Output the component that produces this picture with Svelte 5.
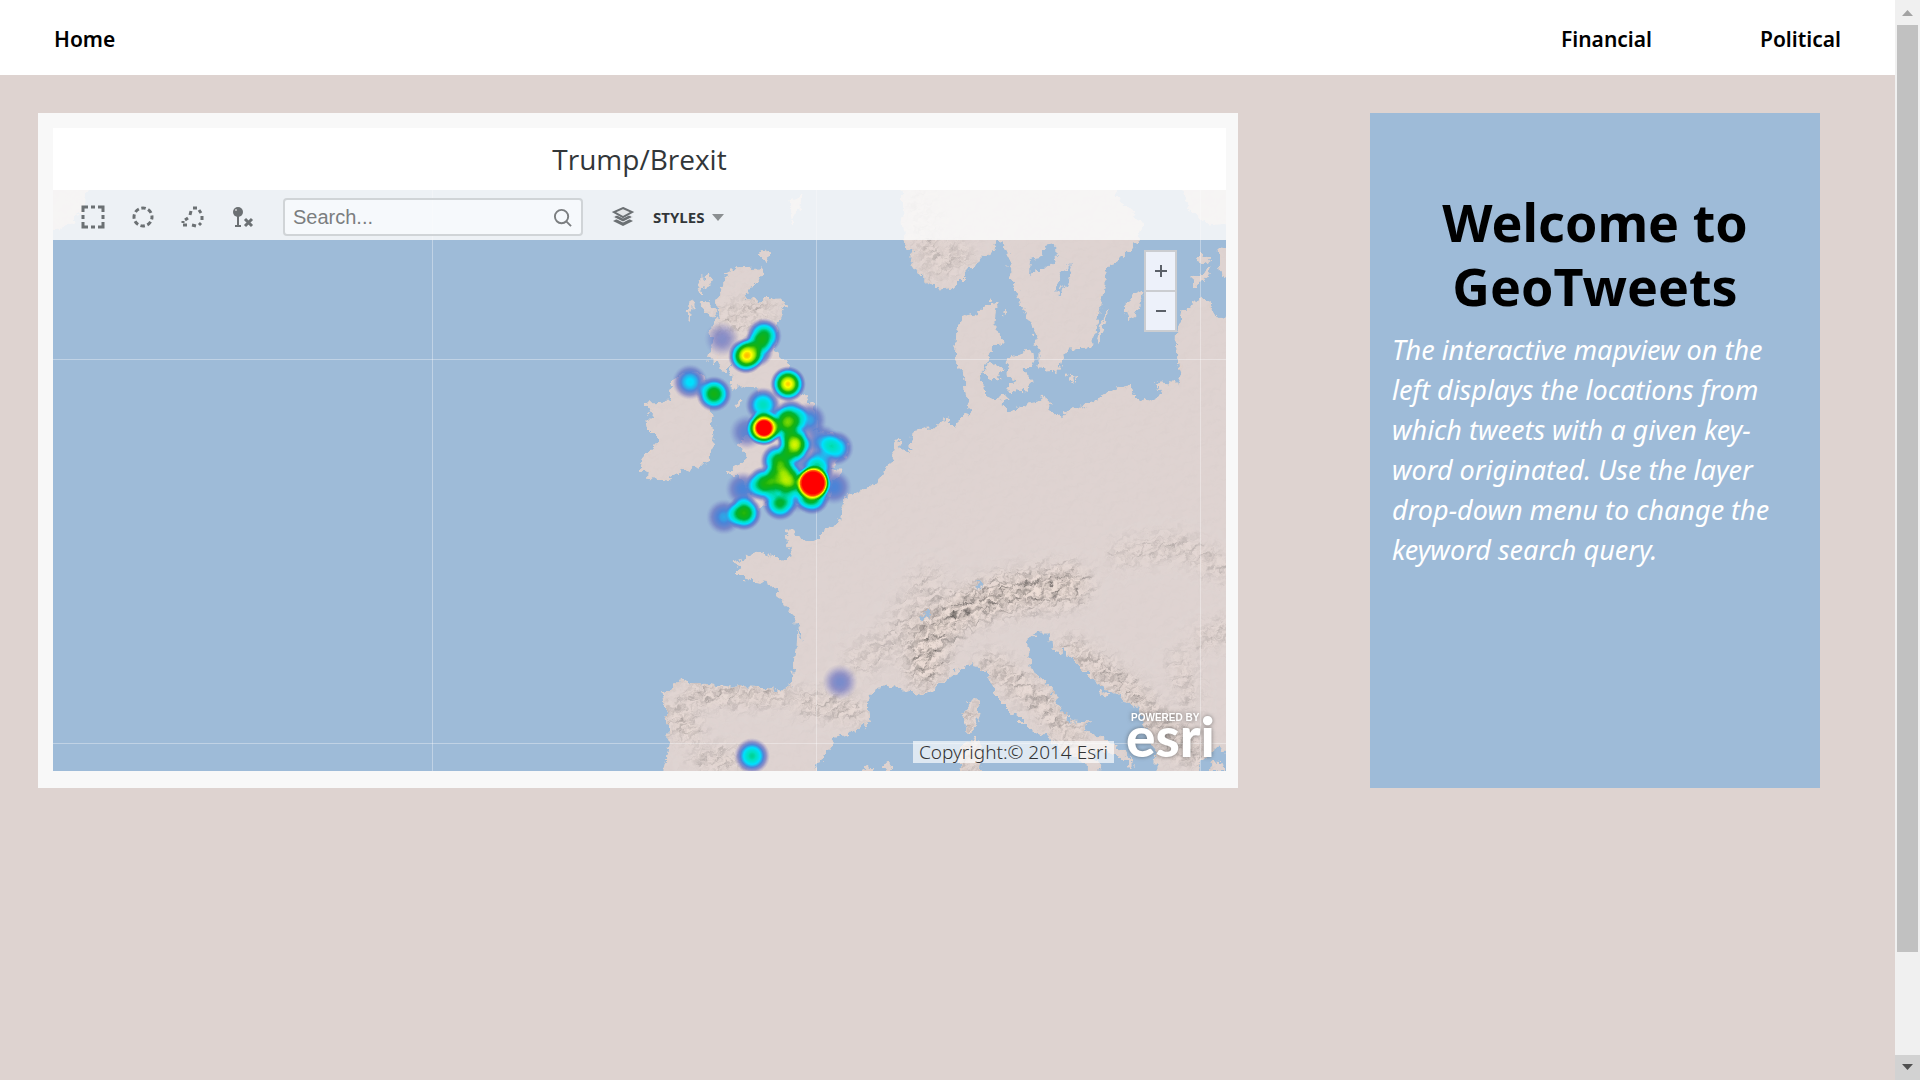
<script>
  let query = $state('');

  const links = ['Financial', 'Political'];

  // heat points, i = intensity
  const points = [
    { x: 746, y: 356, i: 0.82 },
    { x: 756, y: 350, i: 0.4 },
    { x: 764, y: 336, i: 0.54 },
    { x: 788, y: 384, i: 0.84 },
    { x: 690, y: 382, i: 0.31 },
    { x: 714, y: 394, i: 0.58 },
    { x: 722, y: 339, i: 0.12 },
    { x: 763, y: 405, i: 0.4 },
    { x: 764, y: 428, i: 1.3 },
    { x: 747, y: 432, i: 0.16 },
    { x: 791, y: 417, i: 0.48 },
    { x: 783, y: 424, i: 0.42 },
    { x: 809, y: 420, i: 0.24 },
    { x: 795, y: 445, i: 0.74 },
    { x: 791, y: 432, i: 0.25 },
    { x: 778, y: 461, i: 0.54 },
    { x: 790, y: 461, i: 0.24 },
    { x: 822, y: 442, i: 0.24 },
    { x: 836, y: 448, i: 0.36 },
    { x: 817, y: 467, i: 0.44 },
    { x: 813, y: 483, i: 2.4 },
    { x: 812, y: 497, i: 0.58 },
    { x: 782, y: 477, i: 0.52 },
    { x: 792, y: 482, i: 0.55 },
    { x: 776, y: 482, i: 0.2 },
    { x: 764, y: 484, i: 0.56 },
    { x: 743, y: 489, i: 0.2 },
    { x: 834, y: 487, i: 0.2 },
    { x: 780, y: 503, i: 0.52 },
    { x: 798, y: 495, i: 0.16 },
    { x: 744, y: 513, i: 0.61 },
    { x: 724, y: 517, i: 0.24 },
    { x: 840, y: 682, i: 0.14 },
    { x: 752, y: 756, i: 0.43 }
  ];

  const steps = [0, 0.1, 0.2, 0.3, 0.4, 0.5, 0.6, 0.7, 0.8, 0.9, 1];

  function heat(i, r) {
    return Math.min(1, i * Math.pow(1 - r * r, 1.5)).toFixed(3);
  }

  // coordinates are in the map's own units, see viewBox
  const mainland = `M1226 321L1214 314 1210 305 1201 298 1193 304 1184 311 1182 322 1177 330 1176 342 1178 360 1181 375
    1179 384 1172 384 1158 383 1157 390 1163 393 1150 402 1140 401 1133 394 1130 386 1118 388 1105 394 1095 401 1082 407
    1070 411 1062 415 1054 416 1048 405 1046 396 1040 401 1028 403 1015 411 1007 412 1003 405 1006 398 995 400 988 396
    983 391 983 382 979 378 984 368 986 358 990 352 994 344 1003 343 1002 336 994 332 994 322 996 306 994 301 985 304
    982 313 970 315 960 319 957 330 956 345 955 362 963 369 965 380 967 395 969 408 971 413 962 416 955 427 948 420
    938 423 936 429 928 428 912 431 911 440 909 455 902 450 898 437 896 448 889 466 881 475 877 483 857 493 845 497
    842 510 842 520 830 527 818 537 810 540 797 538 795 530 785 530 788 542 792 550 792 558 780 559 767 556 762 553
    750 556 735 562 739 567 737 571 743 577 753 580 767 583 777 590 783 600 787 608 795 618 797 630 796 650 793 673
    792 685 782 692 770 688 750 687 730 687 713 685 693 683 687 680 677 683 676 688 662 693 665 707 669 727 669 747
    663 775 815 775 820 760 830 747 833 738 850 733 870 722 868 700 873 692 885 684 903 690 920 694 932 690 953 675
    968 664 980 667 990 677 997 697 1010 710 1018 717 1028 727 1047 737 1067 753 1087 763 1088 775 1098 775 1100 764
    1094 756 1100 750 1110 752 1127 760 1133 768 1133 762 1120 750 1100 737 1080 727 1092 723 1072 722 1060 708
    1050 687 1030 670 1027 653 1030 648 1025 642 1037 633 1050 633 1052 647 1058 655 1063 647 1073 660 1093 680
    1113 693 1137 707 1147 727 1152 743 1157 757 1157 775 1197 775 1200 760 1217 747 1234 752 1234 321Z`;

  const scandinavia = `M902 182L903 220 905 240 907 250 914 248 912 264 920 275 930 284 940 288 955 286 965 276 975 264
    985 255 994 250 996 238 1000 240 1003 247 1009 252 1009 265 1012 283 1018 290 1022 308 1030 322 1037 334 1034 342
    1040 350 1040 368 1045 371 1058 370 1062 358 1070 348 1090 347 1097 325 1100 305 1104 285 1104 270 1115 263
    1120 256 1130 252 1137 240 1142 225 1133 212 1120 203 1112 182ZM1180 182L1190 210 1210 225 1234 222 1234 182Z`;

  const britain = `M730 270L763 269 760 277 743 297 750 300 783 299 785 307 777 327 773 350 787 363 790 373 800 393
    812 403 817 427 813 432 833 435 847 443 845 453 830 470 842 470 838 477 827 487 830 493 813 507 787 500 780 507
    763 503 760 507 743 515 730 515 743 502 753 493 750 487 737 477 728 472 743 463 748 453 737 445 747 437 757 432
    763 420 767 407 757 400 760 388 743 387 732 387 733 377 730 365 723 372 718 360 713 365 713 343 710 330 720 317
    718 297 725 283Z`;

  const ireland = `M648 403L672 402 668 390 678 377 697 373 713 390 717 400 710 410 713 437 708 462 683 470 667 480
    643 478 650 472 640 470 642 460 660 440 647 427 646 420 656 420 650 413Z`;

  const islands = `M710 273L709 283 700 295 697 283ZM693 300L690 320 688 320 689 302ZM704 299L714 310 718 318 706 312 702 307Z
    M762 250L768 253 765 261 760 257ZM740 399L742 402 737 408 735 405ZM711 350L720 346 714 360 708 360Z
    M1143 291L1138 308 1130 322 1127 305 1134 295ZM1108 311L1102 330 1098 343 1096 343 1101 325ZM1068 373L1076 379 1071 382Z
    M987 365L996 364 1001 370 998 380 991 379 985 373ZM1007 362L1020 352 1031 350 1032 362 1024 370 1030 380 1026 392
    1008 390 1008 386 1018 382 1010 377ZM1202 254L1210 260 1204 263 1196 260ZM1193 276L1210 269 1209 276 1199 281 1194 288Z
    M1218 247L1230 248 1230 280 1222 276ZM1002 311L1007 312 1004 314Z
    M963 713L970 703 977 699 979 713 975 731 968 730ZM960 748L975 738 982 747 980 775 963 775ZM861 771L868 767 875 771Z
    M882 766L888 763 891 767 886 769ZM49 186L88 186 84 205 70 224 49 232Z M790 200L803 196 798 212 792 222Z
    M1210 762L1222 764 1224 771 1212 769ZM1098 690L1110 694 1104 697Z`;

  const lakes = `M1029 276L1030 260 1040 258 1045 247 1055 245 1056 260 1045 270 1037 270ZM1072 263L1066 283 1058 297 1057 285 1063 272Z
    M919 619L928 611 931 614 923 621ZM974 581L982 584 981 590ZM795 620L800 632 804 641 797 632ZM908 437L912 451 905 448Z`;
</script>

<div class="window">
  <div class="page">
    <nav>
      <a href="#home">Home</a>
      <div class="links">
        {#each links as link}
          <a href="#{link.toLowerCase()}">{link}</a>
        {/each}
      </div>
    </nav>

    <main>
      <section class="panel">
        <h2>Trump/Brexit</h2>
        <div class="map">
          <svg class="canvas" viewBox="53 190 1173 581" role="img" aria-label="Heat map of tweets">
            <defs>
              <filter id="coast" filterUnits="userSpaceOnUse" x="45" y="182" width="1190" height="598" color-interpolation-filters="sRGB">
                <feTurbulence type="fractalNoise" baseFrequency="0.14" numOctaves="3" seed="4" />
                <feDisplacementMap in="SourceGraphic" scale="11" xChannelSelector="R" yChannelSelector="G" />
                <feGaussianBlur stdDeviation="0.5" />
              </filter>
              <filter id="relief" filterUnits="userSpaceOnUse" x="45" y="182" width="1190" height="598" color-interpolation-filters="sRGB">
                <feTurbulence type="fractalNoise" baseFrequency="0.09 0.13" numOctaves="3" seed="9" />
                <feColorMatrix values="0 0 0 0 0  0 0 0 0 0  0 0 0 0 0  1 0 0 0 0" />
                <feDiffuseLighting surfaceScale="3" diffuseConstant="1.1" lighting-color="#dccdc5">
                  <feDistantLight azimuth="225" elevation="60" />
                </feDiffuseLighting>
              </filter>
              <filter id="soft" filterUnits="userSpaceOnUse" x="45" y="182" width="1190" height="598">
                <feGaussianBlur stdDeviation="9" />
              </filter>
              <filter id="heat" filterUnits="userSpaceOnUse" x="600" y="300" width="300" height="480" color-interpolation-filters="sRGB">
                <feColorMatrix values="0 0 0 1 0  0 0 0 1 0  0 0 0 1 0  0 0 0 1 0" />
                <feComponentTransfer>
                  <feFuncR type="table" tableValues=".4 .36 .26 0 0 0 .1 .6 1 1 1" />
                  <feFuncG type="table" tableValues=".4 .4 .5 .88 .88 .7 .7 .9 1 .5 0" />
                  <feFuncB type="table" tableValues=".75 .75 .85 1 .75 .2 .05 0 0 0 0" />
                  <feFuncA type="table" tableValues="0 .6 .92 1 1 1 1 1 1 1 1" />
                </feComponentTransfer>
              </filter>
              <mask id="mountains" maskUnits="userSpaceOnUse" x="45" y="182" width="1190" height="598">
                <rect x="45" y="182" width="1190" height="598" fill="#fff" fill-opacity=".02" />
                <g filter="url(#soft)" fill="none" stroke="#fff" stroke-linecap="round">
                  <path d="M925 668L930 635 960 610 1000 595 1070 585" stroke-width="36" stroke-opacity=".8" />
                  <path d="M800 702L860 712M690 695L780 695" stroke-width="14" stroke-opacity=".7" />
                  <path d="M675 715L690 730M990 665L1040 700 1075 740M1070 650L1130 690 1180 750" stroke-width="22" stroke-opacity=".6" />
                  <path d="M1120 555L1180 545 1225 570M1200 640L1226 630M1180 660L1190 700" stroke-width="18" stroke-opacity=".4" />
                  <path d="M920 200L935 265 960 255M860 660L895 640 930 580" stroke-width="28" stroke-opacity=".3" />
                  <path d="M730 320L760 310" stroke-width="26" stroke-opacity=".4" />
                  <path d="M971 710V770M700 760H740M1180 730L1200 760" stroke-width="14" stroke-opacity=".6" />
                </g>
              </mask>
              <clipPath id="land">
                <path d={mainland} />
                <path d={scandinavia} />
                <path d={britain} />
                <path d={ireland} />
                <path d={islands} />
              </clipPath>
              {#each points as p, n}
                <radialGradient id="p{n}">
                  {#each steps as s}
                    <stop offset={s} stop-opacity={heat(p.i, s)} />
                  {/each}
                </radialGradient>
              {/each}
            </defs>

            <rect x="53" y="190" width="1173" height="581" fill="#9ebbd8" />
            <g filter="url(#coast)">
              <g fill="#dfd4d2" stroke="#e3d3cb" stroke-width="1">
                <path d={mainland} />
                <path d={scandinavia} />
                <path d={britain} />
                <path d={ireland} />
                <path d={islands} />
              </g>
              <g clip-path="url(#land)">
                <g mask="url(#mountains)">
                  <rect x="45" y="182" width="1190" height="598" filter="url(#relief)" />
                </g>
              </g>
              <path d={lakes} fill="#9ebbd8" />
            </g>
            <path d="M432.500 190V771M816.500 190V771M1200.500 190V771M53 359.500H1226M53 743.500H1226" stroke="#fff" stroke-opacity=".35" />
            <g filter="url(#heat)">
              {#each points as p, n}
                <circle cx={p.x} cy={p.y} r="18" fill="url(#p{n})" />
              {/each}
            </g>
          </svg>

          <div class="toolbar">
            <button aria-label="Select by rectangle">
              <svg viewBox="0 0 24 24"><path d="M2 7V2H7M10 2H14M17 2H22V7M22 10V14M22 17V22H17M14 22H10M7 22H2V17M2 14V10" /></svg>
            </button>
            <button aria-label="Select by circle">
              <svg viewBox="0 0 24 24"><circle cx="12" cy="12" r="9" stroke-dasharray="4.500 2.570" stroke-dashoffset="2" /></svg>
            </button>
            <button aria-label="Select by polygon">
              <svg viewBox="0 0 24 24"><path d="M12 3H16M18 5L20 8M21 11V15M20 18L18 20M15 21L11 20M10 6L9 10M7 13L4 15M2 16V18M2 20H6" /></svg>
            </button>
            <button aria-label="Clear selection">
              <svg viewBox="0 0 24 24"><circle class="solid" cx="7" cy="7" r="5" /><path d="M7 11V21M4 21H10" stroke-width="2" /><path d="M14 14L21 21M21 14L14 21" /><circle cx="5" cy="5" r="1" fill="#ccc" stroke="none" /></svg>
            </button>
            <label class="search">
              <input type="text" placeholder="Search..." aria-label="Search" bind:value={query} />
              <svg viewBox="0 0 20 20"><circle cx="9" cy="9" r="7" /><path d="M14 14L19 19" /></svg>
            </label>
            <button class="styles">
              <svg class="layers" viewBox="0 0 24 24">
                <path d="M2 16L12 21 22 16 18 14 12 17 6 14Z" />
                <path d="M2 12L12 17 22 12 18 10 12 13 6 10Z" stroke="#eceff3" stroke-width="1" />
                <path d="M12 3L21 7 12 12 3 7Z" fill="#e4e7e9" stroke="#6b7073" stroke-width="2" />
              </svg>
              STYLES
              <svg class="caret" viewBox="0 0 12 8"><path d="M0 1H12L6 8Z" /></svg>
            </button>
          </div>

          <div class="zoom">
            <button aria-label="Zoom in"><svg viewBox="0 0 12 12"><path d="M0 6H12M6 0V12" /></svg></button>
            <button aria-label="Zoom out"><svg viewBox="0 0 12 12"><path d="M1 6H11" /></svg></button>
          </div>

          <div class="credit">
            <span class="copyright">Copyright:© 2014 Esri</span>
            <svg class="logo" viewBox="0 0 92 56" role="img" aria-label="Powered by Esri">
              <text class="powered" x="5" y="14">POWERED BY</text>
              <text x="0" y="50">esri</text>
            </svg>
          </div>
        </div>
      </section>

      <aside>
        <h1>Welcome to GeoTweets</h1>
        <p>
          The interactive mapview on the left displays the locations from which tweets with a given
          key-word originated. Use the layer drop-down menu to change the keyword search query.
        </p>
      </aside>
    </main>
  </div>

  <div class="scrollbar">
    <svg viewBox="0 0 25 25"><path d="M7 16L12.500 10 18 16Z" fill="#a3a3a3" /></svg>
    <div class="track"><div class="thumb"></div></div>
    <svg class="down" viewBox="0 0 25 25"><path d="M7 9L12.500 15 18 9Z" fill="#505050" /></svg>
  </div>
</div>

<style>
  :global(body) {
    background: #ded3d0;
  }

  .window {
    display: flex;
    height: 100vh;
    font-family: "Segoe UI", "Noto Sans", "Open Sans", sans-serif;
  }

  .page {
    flex: 1;
    min-width: 0;
    overflow: hidden;
  }

  nav {
    box-sizing: border-box;
    display: flex;
    justify-content: space-between;
    align-items: center;
    height: 75px;
    padding: 2px 54px 0;
    background: #fff;
  }

  .links {
    display: flex;
    gap: 108px;
  }

  nav a {
    color: #000;
    font-size: 21px;
    font-weight: 600;
    line-height: 28px;
    text-decoration: none;
  }

  main {
    display: flex;
    justify-content: space-between;
    gap: 38px;
    padding: 38px 75px 38px 38px;
  }

  .panel {
    box-sizing: border-box;
    flex: 0 1 1200px;
    padding: 15px 12px 17px 15px;
    background: #f8f8f8;
  }

  h2 {
    margin: 0;
    background: #fff;
    color: #323639;
    font-family: "Open Sans", sans-serif;
    font-size: 28px;
    font-weight: 400;
    line-height: 62px;
    text-align: center;
  }

  .map {
    position: relative;
  }

  .canvas {
    display: block;
    width: 100%;
  }

  button {
    padding: 0;
    border: none;
    background: none;
    cursor: pointer;
  }

  .toolbar {
    position: absolute;
    top: 0;
    left: 0;
    right: 0;
    box-sizing: border-box;
    display: flex;
    align-items: center;
    gap: 26px;
    height: 50px;
    padding: 4px 28px 0;
    background: rgba(250, 250, 250, 0.85);
  }

  .toolbar button svg {
    display: block;
    width: 24px;
    height: 24px;
    fill: none;
    stroke: #6b7073;
    stroke-width: 3;
  }

  .toolbar button .solid {
    fill: #6b7073;
    stroke: none;
  }

  .search {
    box-sizing: border-box;
    display: flex;
    align-items: center;
    width: 300px;
    height: 38px;
    margin: 0 2px;
    padding: 0 9px 0 8px;
    border: 2px solid #d0d4d7;
    border-radius: 4px;
    background: rgba(250, 253, 255, 0.65);
  }

  .search input {
    flex: 1;
    min-width: 0;
    padding: 0;
    border: none;
    outline: none;
    background: none;
    color: #555;
    font: 20px "Liberation Sans", Arial, sans-serif;
  }

  .search input::placeholder {
    color: #7b7e80;
    opacity: 1;
  }

  .search svg {
    width: 19px;
    height: 19px;
    fill: none;
    stroke: #7b7e80;
    stroke-width: 2;
  }

  .toolbar .styles {
    display: flex;
    align-items: center;
    color: #323639;
    font: 700 15px "Open Sans", sans-serif;
  }

  .toolbar .styles .layers {
    margin-right: 18px;
    fill: #6b7073;
    stroke: none;
  }

  .toolbar .styles .caret {
    width: 12px;
    height: 8px;
    margin-left: 8px;
    fill: #8b8f91;
    stroke: none;
  }

  .zoom {
    position: absolute;
    top: 60px;
    right: 49px;
    display: flex;
    flex-direction: column;
    gap: 2px;
    padding: 2px;
    background: #cbcdd1;
  }

  .zoom button {
    display: grid;
    place-items: center;
    width: 29px;
    height: 38px;
    background: #edf1fa;
  }

  .zoom svg {
    width: 12px;
    height: 12px;
    stroke: #5b6068;
    stroke-width: 2;
  }

  .credit {
    position: absolute;
    right: 8px;
    bottom: 8px;
    display: flex;
    align-items: flex-end;
    gap: 12px;
  }

  .copyright {
    padding: 0 6px;
    background: rgba(255, 255, 255, 0.66);
    color: #323232;
    font-size: 19px;
    font-weight: 300;
    line-height: 22px;
  }

  .logo {
    width: 92px;
    height: 56px;
    overflow: visible;
    fill: #fff;
    font: 900 55px Lato, sans-serif;
    filter: drop-shadow(0 0 2px rgba(60, 60, 60, 0.6));
  }

  .logo .powered {
    font: 700 10px "Liberation Sans", Arial, sans-serif;
  }

  aside {
    box-sizing: border-box;
    flex: 0 0 450px;
    padding: 77px 22px 22px;
    background: #9ebbd8;
  }

  h1 {
    margin: 0 0 12px;
    color: #000;
    font-size: 52px;
    font-weight: 700;
    line-height: 64px;
    text-align: center;
  }

  p {
    margin: 0;
    color: #fff;
    font-size: 27px;
    font-style: italic;
    line-height: 40px;
  }

  .scrollbar {
    display: flex;
    flex-direction: column;
    width: 25px;
    background: #f0f0f0;
  }

  .scrollbar svg {
    width: 25px;
    height: 25px;
  }

  .down {
    background: #d2d2d2;
  }

  .track {
    flex: 1;
    padding: 0 2px;
  }

  .thumb {
    height: 90%;
    background: #c1c1c1;
  }
</style>
